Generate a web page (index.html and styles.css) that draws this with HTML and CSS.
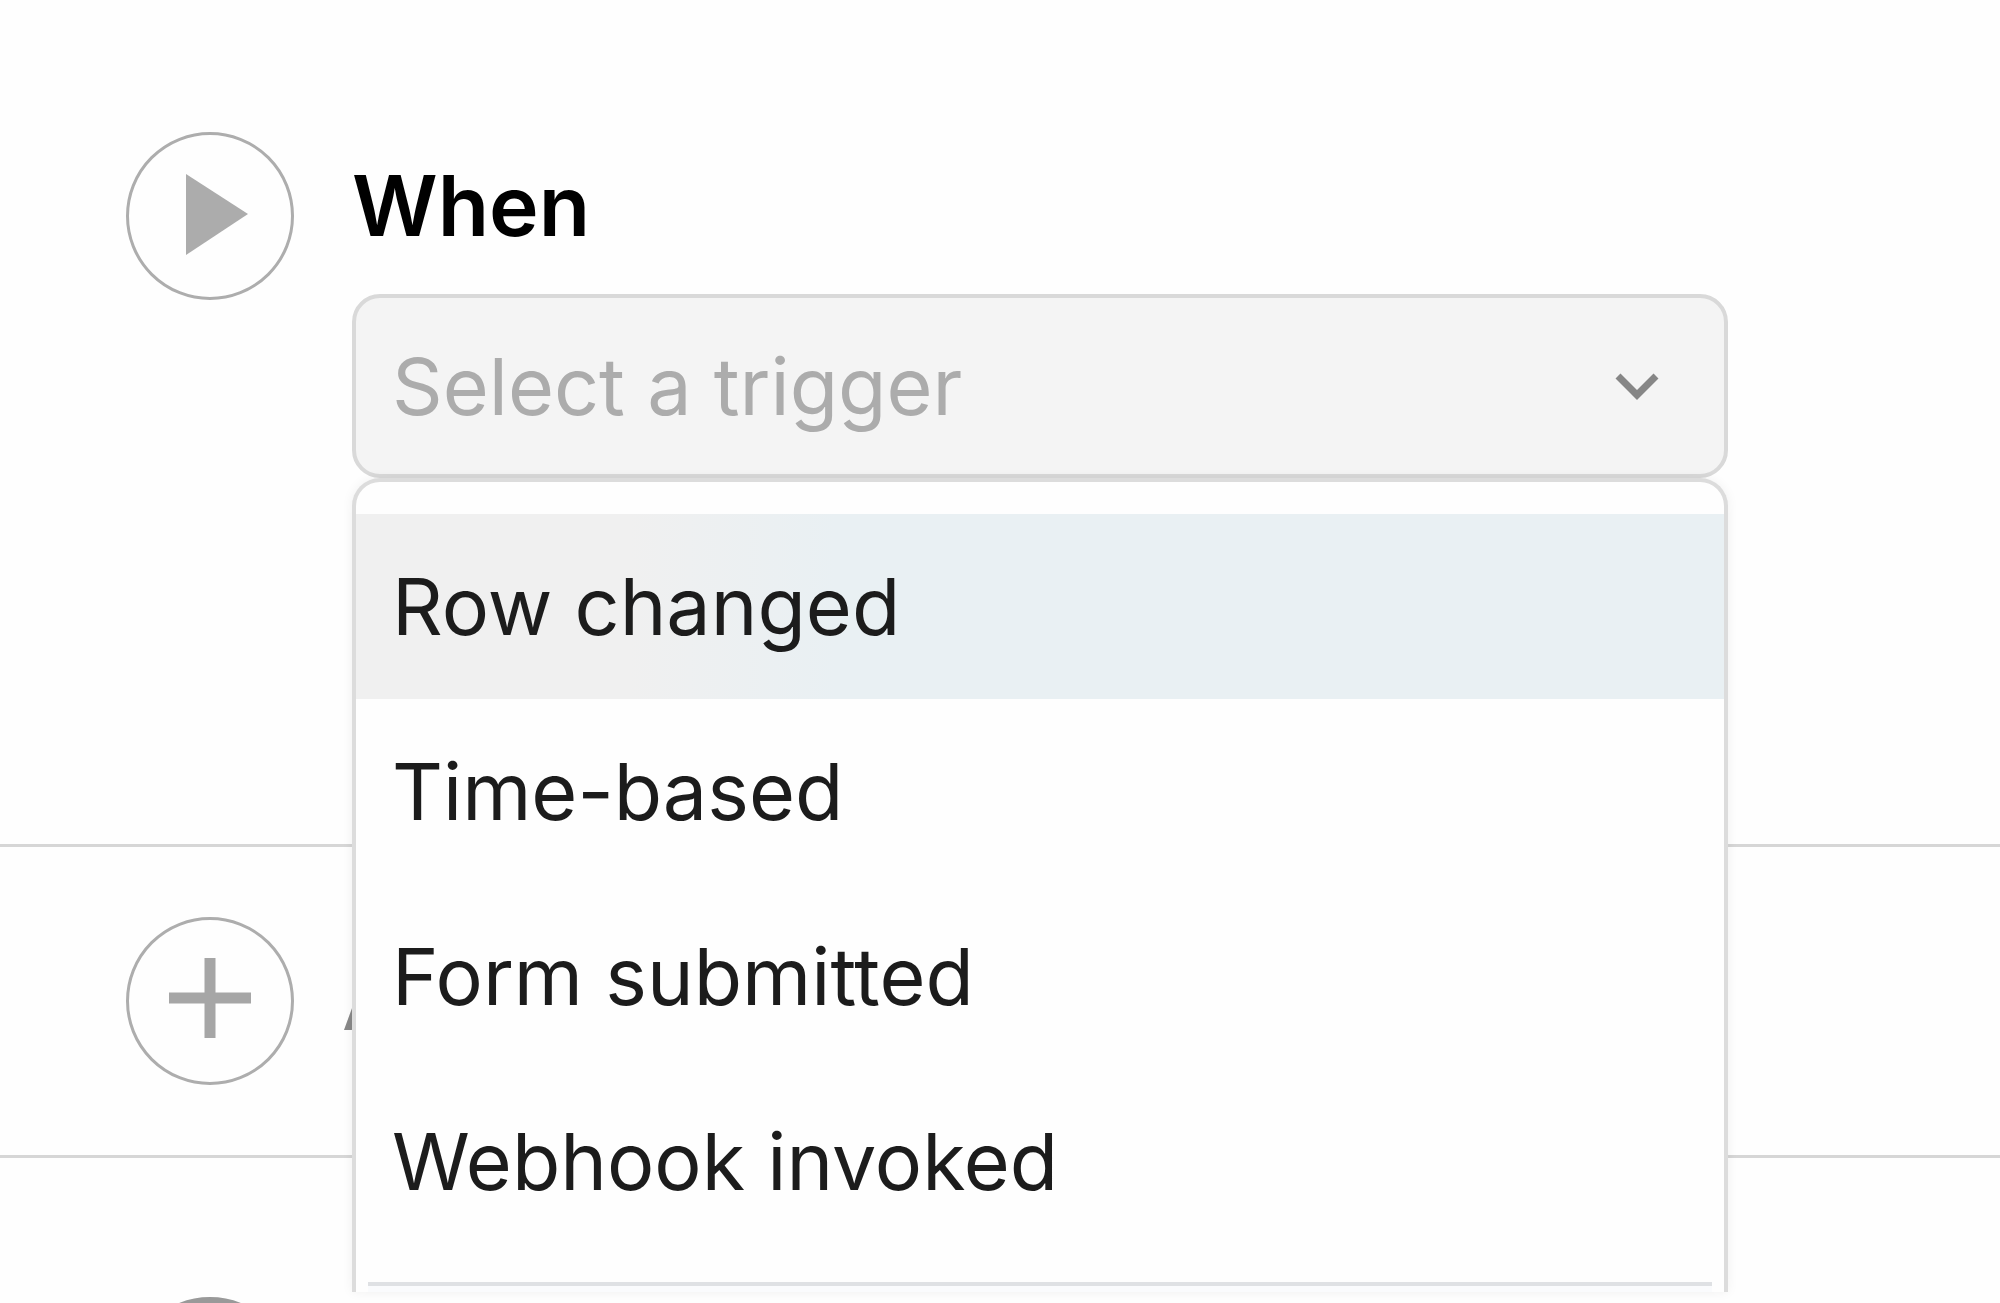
FILE: index.html
```
<!DOCTYPE html>
<html lang="en">

<head>
  <meta charset="UTF-8">
  <meta name="viewport" content="width=device-width, initial-scale=1">
  <title>Automation</title>
  <link rel="stylesheet" href="styles.css">
</head>

<body>
  <main class="flow">

    <section class="step step-when">
      <span class="step-icon">
        <svg viewBox="0 0 168 168" aria-hidden="true">
          <path d="M60 42 L122 82 L60 123 Z" fill="#acacac"/>
        </svg>
      </span>
      <div class="step-body">
        <label class="step-title" for="trigger">When</label>
        <div class="picker">
          <select class="picker-select" id="trigger">
            <option>Select a trigger</option>
          </select>
          <svg class="picker-arrow" viewBox="0 0 48 32" aria-hidden="true">
            <path d="M5 6 L24 25 L43 6" fill="none" stroke="#868686" stroke-width="7"/>
          </svg>
          <div class="menu">
            <ul class="menu-list">
              <li><button class="menu-item active" type="button">Row changed</button></li>
              <li><button class="menu-item" type="button">Time-based</button></li>
              <li><button class="menu-item" type="button">Form submitted</button></li>
              <li><button class="menu-item" type="button">Webhook invoked</button></li>
            </ul>
            <div class="menu-footer"></div>
          </div>
        </div>
      </div>
    </section>

    <section class="step step-add">
      <span class="step-icon">
        <svg viewBox="0 0 168 168" aria-hidden="true">
          <path d="M84 41 V121 M43 81 H125" fill="none" stroke="#a6a6a6" stroke-width="11"/>
        </svg>
      </span>
      <span class="step-label">A</span>
    </section>

    <section class="step step-end">
      <span class="step-icon dark"></span>
    </section>

  </main>
</body>

</html>
```
FILE: styles.css
```
* {
  margin: 0;
  padding: 0;
  box-sizing: border-box;
}

body {
  background-color: #fefefe;
  color: #1c1c1c;
  font-family: Inter, "Liberation Sans", sans-serif;
  font-size: 79px;
}

/* Steps */
.flow {
  height: 100vh;
  overflow: hidden;
}

.step {
  display: flex;
  gap: 58px;
  padding: 70px 272px 70px 126px;
  border-bottom: 3px solid #d6d6d6;
}

.step-when {
  padding-top: 132px;
  padding-bottom: 366px;
}

.step-add {
  gap: 48px;
  align-items: center;
}

.step-end {
  padding-top: 139px;
  border-bottom: none;
}

.step-icon {
  flex: none;
  width: 168px;
  height: 168px;
  border: 3px solid #adadad;
  border-radius: 50%;
}

.step-icon svg {
  display: block;
  margin: -3px;
  width: 168px;
  height: 168px;
}

.step-icon.dark {
  border: 6px solid #999;
}

.step-body {
  flex: 1;
}

.step-title {
  display: block;
  margin-bottom: 12px;
  color: #000;
  font-size: 84px;
  font-weight: 600;
  line-height: 148px;
  padding-bottom: 2px;
}

.step-label {
  color: #888;
  line-height: 160px;
}

/* Trigger picker */
.picker {
  position: relative;
}

.picker-select {
  display: block;
  width: 100%;
  height: 184px;
  padding: 0 120px 0 36px;
  appearance: none;
  background-color: #f4f4f4;
  border: 4px solid #d9d9d9;
  border-radius: 28px;
  color: #acacac;
  font: inherit;
}

.picker-arrow {
  position: absolute;
  top: 76px;
  right: 67px;
  width: 48px;
  height: 32px;
  pointer-events: none;
}

/* Dropdown */
.menu {
  position: absolute;
  top: 100%;
  left: 0;
  right: 0;
  background-color: #fefefe;
  border: 4px solid #dcdcdc;
  border-bottom: none;
  border-radius: 28px 28px 0 0;
  box-shadow: 0 0 12px rgba(0, 0, 0, 0.06);
}

.menu-list {
  list-style: none;
  padding: 32px 0 28px;
}

.menu-item {
  display: block;
  width: 100%;
  padding: 0 36px;
  background: none;
  border: none;
  color: inherit;
  font: inherit;
  line-height: 185px;
  text-align: left;
  cursor: pointer;
}

.menu-item.active {
  background: linear-gradient(to right, #f0f0f0 20%, #e9f0f3 35%);
}

.menu-footer {
  height: 10px;
  margin: 0 12px;
  background-color: #fafbfd;
  border-top: 4px solid #dfe1e4;
}
```
